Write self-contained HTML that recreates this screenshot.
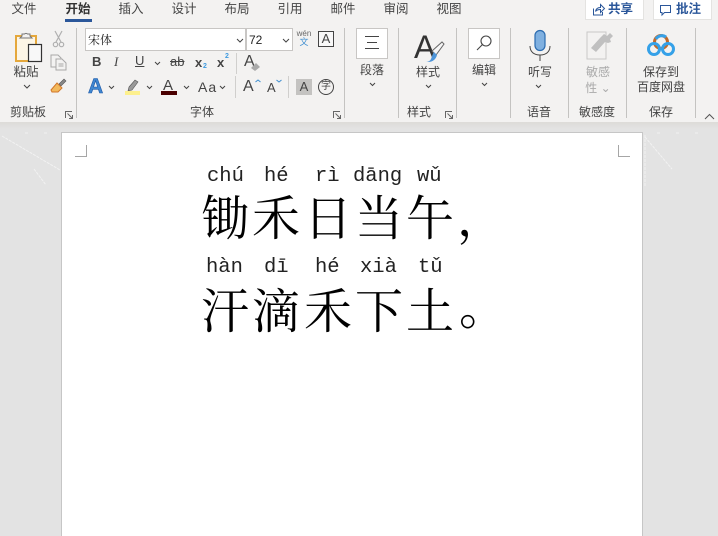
<!DOCTYPE html>
<html lang="zh"><head><meta charset="utf-8">
<style>
html,body{margin:0;padding:0;width:718px;height:536px;overflow:hidden}
#w{position:absolute;left:0;top:0;width:718px;height:536px;overflow:hidden;background:#e3e3e3;font-family:"Liberation Sans","Noto Sans CJK SC",sans-serif;color:#444}
.t{position:absolute;white-space:nowrap;font-size:12px;line-height:14px;color:#444}
.c{transform:translateX(-50%)}
.box{position:absolute;box-sizing:border-box}
.sep{position:absolute;top:28px;width:1px;height:90px;background:#c4c3c1}
svg{position:absolute;overflow:visible}
.h{position:absolute;font-family:"Noto Serif CJK SC",serif;font-size:48px;line-height:50px;color:#000;font-weight:400;width:52px;text-align:center}
.p{position:absolute;font-family:"Liberation Mono",monospace;font-size:20.5px;line-height:24px;color:#222;white-space:nowrap}
</style></head><body><div id="w">
<div class="box" style="left:0;top:0;width:718px;height:122px;background:#f3f2f1"></div>
<div class="box" style="left:0;top:122px;width:718px;height:7px;background:linear-gradient(#dddbd8,#e3e3e3)"></div>

<div class="t c" style="left:24px;top:2px;font-size:12.5px">文件</div>
<div class="t c" style="left:78px;top:2px;font-size:12.5px;font-weight:700;color:#333">开始</div>
<div class="box" style="left:65px;top:19px;width:27px;height:3px;background:#2b579a"></div>
<div class="t c" style="left:131px;top:2px;font-size:12.5px">插入</div>
<div class="t c" style="left:184px;top:2px;font-size:12.5px">设计</div>
<div class="t c" style="left:237px;top:2px;font-size:12.5px">布局</div>
<div class="t c" style="left:290px;top:2px;font-size:12.5px">引用</div>
<div class="t c" style="left:343px;top:2px;font-size:12.5px">邮件</div>
<div class="t c" style="left:396px;top:2px;font-size:12.5px">审阅</div>
<div class="t c" style="left:449px;top:2px;font-size:12.5px">视图</div>

<div class="box" style="left:585px;top:-2px;width:59px;height:22px;background:#fff;border:1px solid #e4e3e1"></div>
<svg style="left:592px;top:3px" width="14" height="13" fill="none" stroke="#2b579a"><path d="M1.500 5.500v6.500h9v-3M3.500 8.500c.5-3 2.500-4 5-4v-3l4 4-4 4v-3c-2 0-4 .5-5 2z"/></svg>
<div class="t" style="left:608px;top:2px;font-weight:700;color:#2b579a;font-size:12.5px">共享</div>
<div class="box" style="left:653px;top:-2px;width:59px;height:22px;background:#fff;border:1px solid #e4e3e1"></div>
<svg style="left:660px;top:4px" width="12" height="12" fill="none" stroke="#2b579a"><path d="M.5 1.500h10v7h-6l-2.500 2.500v-2.500h-1.500z"/></svg>
<div class="t" style="left:676px;top:2px;font-weight:700;color:#2b579a;font-size:12.5px">批注</div>

<div class="sep" style="left:76px"></div>
<div class="sep" style="left:344px"></div>
<div class="sep" style="left:398px"></div>
<div class="sep" style="left:456px"></div>
<div class="sep" style="left:510px"></div>
<div class="sep" style="left:568px"></div>
<div class="sep" style="left:626px"></div>
<div class="sep" style="left:695px"></div>

<!-- clipboard -->
<svg style="left:14px;top:31px" width="30" height="32" fill="none">
<path d="M2 5h20v25H2z" fill="#fdf6e6" stroke="#e5a83c" stroke-width="2"/>
<path d="M8 5V3h2.500a2 2 0 0 1 3 0H16v2l2 2H6z" fill="#f3f2f1" stroke="#777"/>
<rect x="14.500" y="13.500" width="13" height="17" fill="#f8f8f8" stroke="#333" stroke-width="1.200"/>
</svg>
<div class="t c" style="left:26px;top:65px;font-size:12.500px">粘贴</div>
<svg style="left:23px;top:84px" width="8" height="5" fill="none" stroke="#444"><path d="M1 1l3 3 3-3"/></svg>
<svg style="left:52px;top:30px" width="14" height="18" fill="none" stroke="#b0b0b0" stroke-width="1.200"><path d="M3 1l6 11M10 1L4 12"/><circle cx="3.500" cy="14.500" r="2.200"/><circle cx="9.500" cy="14.500" r="2.200"/></svg>
<svg style="left:50px;top:54px" width="17" height="17" fill="#f3f2f1" stroke="#a8a8a8"><path d="M1 1h7l3 3v9H1z"/><path d="M6 5h6l4 4v7H6z"/><path d="M8.500 10h5M8.500 12h5" /></svg>
<svg style="left:50px;top:78px" width="17" height="16" fill="none"><path d="M9 6l5-5 2 2-5 5z" fill="#888" stroke="#555" stroke-width=".6"/><path d="M7 5l5 5-4 4-6 0 -1-2z" fill="#f2b95c" stroke="#d2772a"/></svg>
<div class="t c" style="left:28px;top:105px">剪贴板</div>
<svg style="left:65px;top:111px" width="8" height="8" fill="none" stroke="#666"><path d="M.5 7V.5H7M2.500 2.500L7.500 7.500M7.500 4v3.500H4"/></svg>

<!-- font -->
<div class="box" style="left:85px;top:28px;width:161px;height:23px;background:#fff;border:1px solid #c8c6c4"></div>
<div class="t" style="left:88px;top:33px;color:#222;font-size:12px;font-family:'Noto Serif CJK SC',serif">宋体</div>
<svg style="left:236px;top:38px" width="8" height="5" fill="none" stroke="#444"><path d="M1 1l3 3 3-3"/></svg>
<div class="box" style="left:246px;top:28px;width:47px;height:23px;background:#fff;border:1px solid #c8c6c4"></div>
<div class="t" style="left:249px;top:33px;color:#222">72</div>
<svg style="left:282px;top:38px" width="8" height="5" fill="none" stroke="#444"><path d="M1 1l3 3 3-3"/></svg>
<div class="t c" style="left:304px;top:29px;font-size:8px;line-height:9px;color:#666">wén</div>
<div class="t c" style="left:304px;top:37px;font-size:9px;line-height:11px;color:#3e8ed0">文</div>
<div class="box" style="left:318px;top:31px;width:16px;height:16px;background:#f8f8f8;border:1px solid #444;font-size:13px;line-height:14px;text-align:center;color:#444">A</div>

<div class="t" style="left:92px;top:55px;font-weight:700;font-size:13px">B</div>
<div class="t" style="left:114px;top:55px;font-style:italic;font-size:13px;font-family:'Liberation Serif',serif">I</div>
<div class="t" style="left:135px;top:54px;font-size:13px;text-decoration:underline">U</div>
<svg style="left:154px;top:61px" width="8" height="5" fill="none" stroke="#444"><path d="M1 1l2.500 2.500L6 1"/></svg>
<div class="t" style="left:170px;top:55px;font-size:13px;text-decoration:line-through">ab</div>
<div class="t" style="left:195px;top:56px;font-size:13px;font-weight:700">x</div>
<div class="t" style="left:203px;top:63px;font-size:7px;line-height:8px;color:#3e9ae0;font-weight:700">2</div>
<div class="t" style="left:217px;top:56px;font-size:13px;font-weight:700">x</div>
<div class="t" style="left:225px;top:53px;font-size:7px;line-height:8px;color:#3e9ae0;font-weight:700">2</div>
<div class="box" style="left:236px;top:53px;width:1px;height:21px;background:#d0cfcd"></div>
<div class="t" style="left:244px;top:53px;font-size:16px;line-height:18px">A</div>
<svg style="left:250px;top:62px" width="11" height="10"><path d="M1 6l5-5 4 4-5 4z" fill="#aaa"/></svg>

<div class="t" style="left:88px;top:77px;font-size:21px;line-height:20px;font-weight:700;color:#3f86d0;-webkit-text-stroke:.6px #1e5aa8">A</div>
<svg style="left:108px;top:85px" width="8" height="5" fill="none" stroke="#444"><path d="M1 1l2.500 2.500L6 1"/></svg>
<svg style="left:125px;top:78px" width="15" height="18"><path d="M4 9l6-7 3 2-6 8-4 1z" fill="#999" stroke="#555" stroke-width=".6"/><rect y="13" width="15" height="4" fill="#fdf08d"/></svg>
<svg style="left:146px;top:85px" width="8" height="5" fill="none" stroke="#444"><path d="M1 1l2.500 2.500L6 1"/></svg>
<div class="t" style="left:163px;top:77px;font-size:15px;line-height:17px">A</div>
<div class="box" style="left:161px;top:91px;width:16px;height:4px;background:#4a0000"></div>
<svg style="left:183px;top:85px" width="8" height="5" fill="none" stroke="#444"><path d="M1 1l2.500 2.500L6 1"/></svg>
<div class="t" style="left:198px;top:79px;font-size:14px;line-height:16px;letter-spacing:1px">Aa</div>
<svg style="left:219px;top:85px" width="8" height="5" fill="none" stroke="#444"><path d="M1 1l2.500 2.500L6 1"/></svg>
<div class="box" style="left:235px;top:76px;width:1px;height:22px;background:#d0cfcd"></div>
<div class="t" style="left:243px;top:78px;font-size:16px;line-height:18px">A</div>
<svg style="left:255px;top:79px" width="6" height="4" fill="none" stroke="#3e8ed0"><path d="M.5 3L3 1l2.500 2"/></svg>
<div class="t" style="left:267px;top:80px;font-size:13px;line-height:15px">A</div>
<svg style="left:276px;top:79px" width="6" height="4" fill="none" stroke="#3e8ed0"><path d="M.5 1L3 3l2.500-2"/></svg>
<div class="box" style="left:288px;top:76px;width:1px;height:22px;background:#d0cfcd"></div>
<div class="box" style="left:296px;top:79px;width:16px;height:16px;background:#c4c3c1;font-size:13px;line-height:16px;text-align:center;color:#444">A</div>
<div class="box" style="left:318px;top:79px;width:16px;height:16px;border:1px solid #444;border-radius:50%;font-size:10px;line-height:14px;text-align:center;color:#444">字</div>
<div class="t c" style="left:202px;top:105px">字体</div>
<svg style="left:333px;top:111px" width="8" height="8" fill="none" stroke="#666"><path d="M.5 7V.5H7M2.500 2.500L7.500 7.500M7.500 4v3.500H4"/></svg>

<!-- paragraph -->
<div class="box" style="left:356px;top:28px;width:32px;height:31px;background:#fff;border:1px solid #c8c6c4"></div>
<svg style="left:364px;top:36px" width="16" height="14" stroke="#444"><path d="M1 .5h14M3 6.500h10M1 12.500h14"/></svg>
<div class="t c" style="left:372px;top:63px">段落</div>
<svg style="left:369px;top:82px" width="8" height="5" fill="none" stroke="#444"><path d="M1 1l2.500 2.500L6 1"/></svg>
<!-- styles -->
<div class="t" style="left:414px;top:31px;font-size:32px;line-height:32px;color:#333">A</div>
<svg style="left:421px;top:41px" width="24" height="22"><path d="M11 10L21 1l2 2-8 11z" fill="#f6f6f6" stroke="#666"/><path d="M4 21c3 0 5-1 6-3 1-2 1-4 3-7l3 3c-1 4-4 7-9 7z" fill="#4e95d9"/></svg>
<div class="t c" style="left:428px;top:65px">样式</div>
<svg style="left:425px;top:84px" width="8" height="5" fill="none" stroke="#444"><path d="M1 1l2.500 2.500L6 1"/></svg>
<div class="t c" style="left:419px;top:105px">样式</div>
<svg style="left:445px;top:111px" width="8" height="8" fill="none" stroke="#666"><path d="M.5 7V.5H7M2.500 2.500L7.500 7.500M7.500 4v3.500H4"/></svg>
<!-- edit -->
<div class="box" style="left:468px;top:28px;width:32px;height:31px;background:#fff;border:1px solid #c8c6c4"></div>
<svg style="left:476px;top:35px" width="16" height="16" fill="none" stroke="#444" stroke-width="1.100"><circle cx="10" cy="6" r="5"/><path d="M6.500 9.500L1 15"/></svg>
<div class="t c" style="left:484px;top:63px">编辑</div>
<svg style="left:481px;top:82px" width="8" height="5" fill="none" stroke="#444"><path d="M1 1l2.500 2.500L6 1"/></svg>
<!-- voice -->
<svg style="left:529px;top:29px" width="22" height="33" fill="none"><rect x="6" y="1.500" width="10" height="20" rx="5" fill="#7fb0e0" stroke="#2b6cb0" stroke-width="1.200"/><path d="M1 17c0 6 4 9 10 9s10-3 10-9" stroke="#444"/><path d="M11 26v6" stroke="#444"/></svg>
<div class="t c" style="left:540px;top:65px">听写</div>
<svg style="left:535px;top:84px" width="8" height="5" fill="none" stroke="#444"><path d="M1 1l2.500 2.500L6 1"/></svg>
<div class="t c" style="left:539px;top:105px">语音</div>
<!-- sensitivity -->
<svg style="left:586px;top:31px" width="30" height="30"><rect x="1" y="1" width="19" height="27" fill="#f3f2f1" stroke="#c8c8c8"/><path d="M5 17l9-10 5 4-9 10zM14 7l4-4 3 2 3-3 3 3-3 3 1 3-3 1-3-1z" fill="#c0c0c0"/></svg>
<div class="t c" style="left:598px;top:65px;color:#aaa">敏感</div>
<div class="t c" style="left:598px;top:81px;color:#aaa">性 ⌄</div>
<div class="t c" style="left:597px;top:105px">敏感度</div>
<!-- save -->
<svg style="left:647px;top:33px" width="28" height="24" fill="none" stroke-width="3"><circle cx="14" cy="9" r="6.500" stroke="#c0692a"/><circle cx="7" cy="16" r="5.500" stroke="#35a1e8"/><circle cx="21" cy="16" r="5.500" stroke="#35a1e8"/><path d="M9 6a7 7 0 0 1 10-2" stroke="#35a1e8"/></svg>
<div class="t c" style="left:661px;top:65px">保存到</div>
<div class="t c" style="left:661px;top:80px">百度网盘</div>
<div class="t c" style="left:661px;top:105px">保存</div>
<svg style="left:704px;top:113px" width="11" height="7" fill="none" stroke="#555"><path d="M1 6l4.500-4.500L10 6"/></svg>

<!-- texture -->
<svg style="left:0;top:125px" width="718" height="90" stroke="#f2f2f2" fill="none"><path d="M2 11L60 45M34 44L46 60M645 12L672 44M645 10v52" stroke-dasharray="3 1"/><path d="M25 8h300M340 8h240M600 8h100" stroke-dasharray="3 16"/></svg>

<!-- page -->
<div class="box" style="left:61px;top:132px;width:582px;height:404px;background:#fff;border:1px solid #c6c6c6;border-bottom:0"></div>
<svg style="left:75px;top:145px" width="12" height="12" fill="none" stroke="#a6a6a6"><path d="M11.500 0v11.500H0"/></svg>
<svg style="left:618px;top:145px" width="12" height="12" fill="none" stroke="#a6a6a6"><path d="M.5 0v11.500H12"/></svg>

<div class="p" style="left:207px;top:165px">chú</div>
<div class="p" style="left:264px;top:165px">hé</div>
<div class="p" style="left:315px;top:165px">rì</div>
<div class="p" style="left:353px;top:165px">dāng</div>
<div class="p" style="left:417px;top:165px">wǔ</div>
<div class="h" style="left:199px;top:190px">锄</div>
<div class="h" style="left:250px;top:190px">禾</div>
<div class="h" style="left:302px;top:190px">日</div>
<div class="h" style="left:353px;top:190px">当</div>
<div class="h" style="left:404px;top:190px">午</div>
<div class="h" style="left:455px;top:190px">，</div>

<div class="p" style="left:206px;top:256px">hàn</div>
<div class="p" style="left:264px;top:256px">dī</div>
<div class="p" style="left:315px;top:256px">hé</div>
<div class="p" style="left:360px;top:256px">xià</div>
<div class="p" style="left:418px;top:256px">tǔ</div>
<div class="h" style="left:199px;top:283px">汗</div>
<div class="h" style="left:250px;top:283px">滴</div>
<div class="h" style="left:302px;top:283px">禾</div>
<div class="h" style="left:353px;top:283px">下</div>
<div class="h" style="left:404px;top:283px">土</div>
<div class="h" style="left:457px;top:279px">。</div>
</div></body></html>
